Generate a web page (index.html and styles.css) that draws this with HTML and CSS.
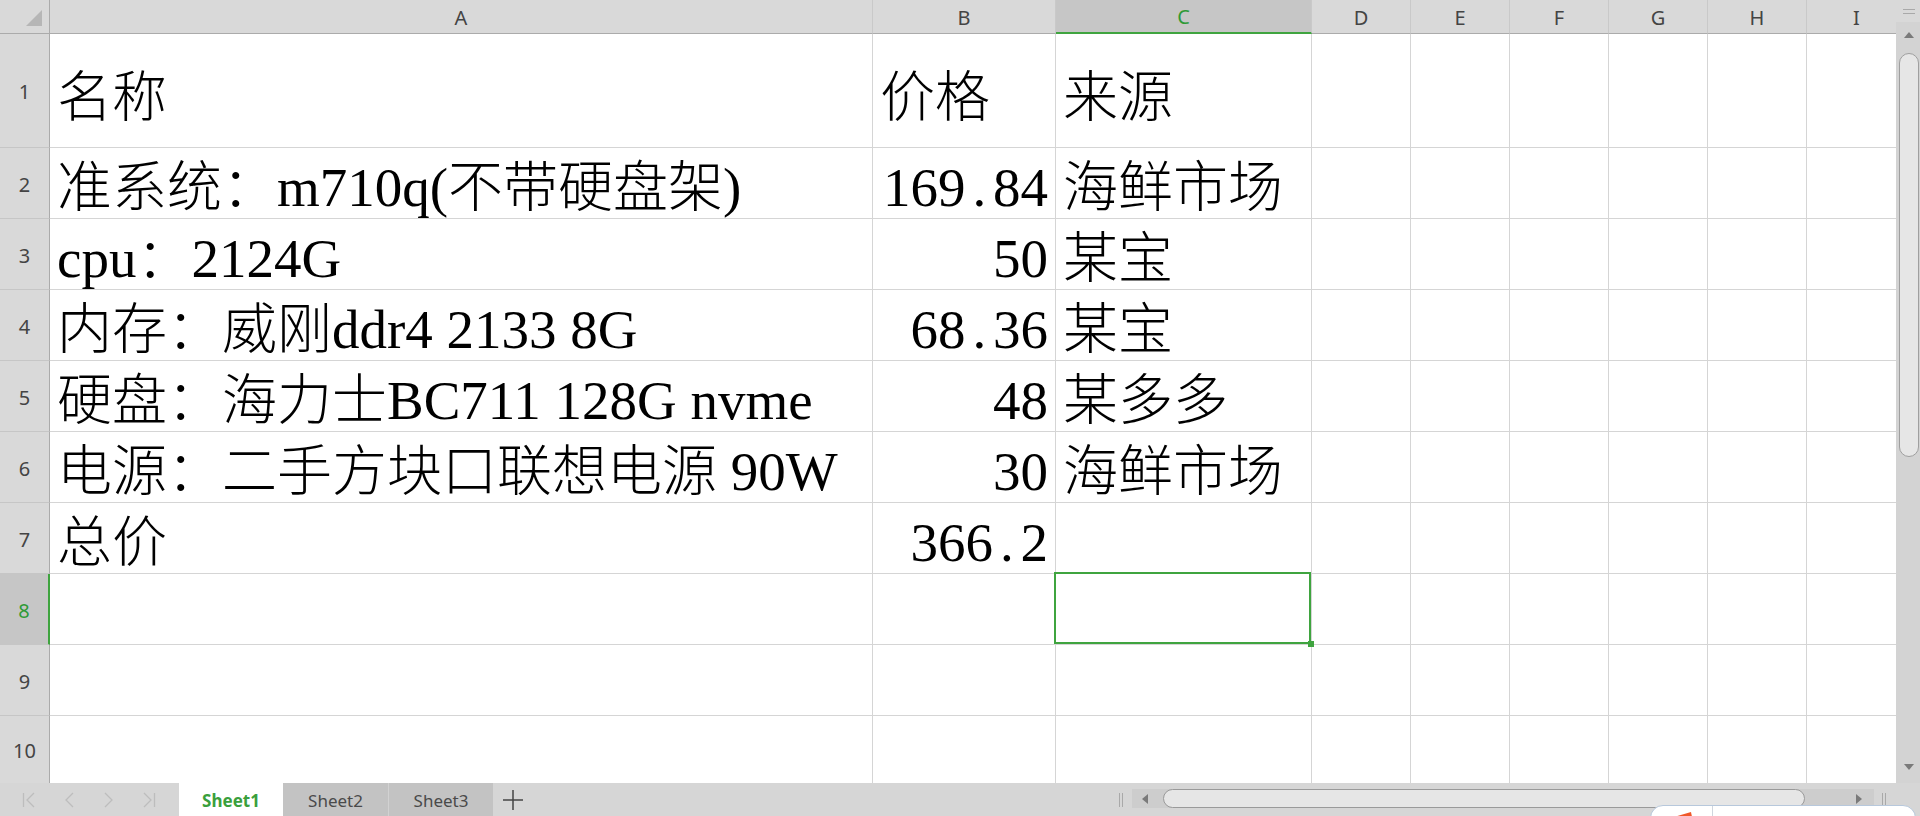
FILE: index.html
```html
<!DOCTYPE html>
<html lang="zh-CN">
<head>
<meta charset="utf-8">
<title>Sheet1</title>
<link rel="stylesheet" href="styles.css">
</head>
<body>
<div class="app">
  <div class="main">
    <div class="sheet">
      <div class="corner"><svg class="tri" width="16" height="16" viewBox="0 0 16 16"><polygon points="16,0 16,16 0,16" fill="#b6b6b6"/></svg></div>
      <div class="ch">A</div><div class="ch">B</div><div class="ch sel">C</div><div class="ch">D</div><div class="ch">E</div><div class="ch">F</div><div class="ch">G</div><div class="ch">H</div><div class="ch ci">I</div>

      <div class="rh">1</div><div class="c r1">名称</div><div class="c r1">价格</div><div class="c r1">来源</div><div class="c"></div><div class="c"></div><div class="c"></div><div class="c"></div><div class="c"></div><div class="c ci"></div>
      <div class="rh">2</div><div class="c">准系统：m710q(不带硬盘架)</div><div class="c num">169<span class="dot">.</span>84</div><div class="c">海鲜市场</div><div class="c"></div><div class="c"></div><div class="c"></div><div class="c"></div><div class="c"></div><div class="c ci"></div>
      <div class="rh">3</div><div class="c">cpu：2124G</div><div class="c num">50</div><div class="c">某宝</div><div class="c"></div><div class="c"></div><div class="c"></div><div class="c"></div><div class="c"></div><div class="c ci"></div>
      <div class="rh">4</div><div class="c">内存：威刚ddr4 2133 8G</div><div class="c num">68<span class="dot">.</span>36</div><div class="c">某宝</div><div class="c"></div><div class="c"></div><div class="c"></div><div class="c"></div><div class="c"></div><div class="c ci"></div>
      <div class="rh">5</div><div class="c">硬盘：海力士BC711 128G nvme</div><div class="c num">48</div><div class="c">某多多</div><div class="c"></div><div class="c"></div><div class="c"></div><div class="c"></div><div class="c"></div><div class="c ci"></div>
      <div class="rh">6</div><div class="c">电源：二手方块口联想电源 90W</div><div class="c num">30</div><div class="c">海鲜市场</div><div class="c"></div><div class="c"></div><div class="c"></div><div class="c"></div><div class="c"></div><div class="c ci"></div>
      <div class="rh">7</div><div class="c">总价</div><div class="c num">366<span class="dot">.</span>2</div><div class="c"></div><div class="c"></div><div class="c"></div><div class="c"></div><div class="c"></div><div class="c"></div><div class="c ci"></div>
      <div class="rh sel">8</div><div class="c"></div><div class="c"></div><div class="c active"><span class="selbox"></span><span class="handle"></span></div><div class="c"></div><div class="c"></div><div class="c"></div><div class="c"></div><div class="c"></div><div class="c ci"></div>
      <div class="rh">9</div><div class="c"></div><div class="c"></div><div class="c"></div><div class="c"></div><div class="c"></div><div class="c"></div><div class="c"></div><div class="c"></div><div class="c ci"></div>
      <div class="rh lr">10</div><div class="c lr"></div><div class="c lr"></div><div class="c lr"></div><div class="c lr"></div><div class="c lr"></div><div class="c lr"></div><div class="c lr"></div><div class="c lr"></div><div class="c ci lr"></div>
    </div>
    <div class="vscroll">
      <div class="vs-top"><svg width="12" height="5" viewBox="0 0 12 5"><line x1="0" y1="0.5" x2="12" y2="0.5" stroke="#a9a9a9"/><line x1="0" y1="4.5" x2="12" y2="4.5" stroke="#a9a9a9"/></svg></div>
      <div class="vs-btn"><svg width="10" height="6" viewBox="0 0 10 6"><polygon points="5,0 10,6 0,6" fill="#7a7a7a"/></svg></div>
      <div class="vs-thumb"></div>
      <div class="vs-fill"></div>
      <div class="vs-btn"><svg width="10" height="6" viewBox="0 0 10 6"><polygon points="0,0 10,0 5,6" fill="#7a7a7a"/></svg></div>
    </div>
  </div>
  <div class="tabbar">
    <div class="nav">
      <span class="navi"><svg width="14" height="16" viewBox="0 0 14 16"><line x1="1.5" y1="1" x2="1.5" y2="15" stroke="#bdbdbd" stroke-width="1.3"/><polyline points="12,1 5,8 12,15" fill="none" stroke="#bdbdbd" stroke-width="1.3"/></svg></span>
      <span class="navi"><svg width="14" height="16" viewBox="0 0 14 16"><polyline points="11,1 4,8 11,15" fill="none" stroke="#bdbdbd" stroke-width="1.3"/></svg></span>
      <span class="navi"><svg width="14" height="16" viewBox="0 0 14 16"><polyline points="3,1 10,8 3,15" fill="none" stroke="#bdbdbd" stroke-width="1.3"/></svg></span>
      <span class="navi"><svg width="14" height="16" viewBox="0 0 14 16"><polyline points="2,1 9,8 2,15" fill="none" stroke="#bdbdbd" stroke-width="1.3"/><line x1="12.5" y1="1" x2="12.5" y2="15" stroke="#bdbdbd" stroke-width="1.3"/></svg></span>
    </div>
    <div class="tab on">Sheet1</div>
    <div class="tab">Sheet2</div>
    <div class="tab t3">Sheet3</div>
    <div class="add"><svg width="20" height="20" viewBox="0 0 20 20"><line x1="0" y1="10" x2="20" y2="10" stroke="#444" stroke-width="1.5"/><line x1="10" y1="0" x2="10" y2="20" stroke="#444" stroke-width="1.5"/></svg></div>
    <div class="spacer"></div>
    <div class="split"><svg width="6" height="14" viewBox="0 0 6 14"><line x1="1.5" y1="0" x2="1.5" y2="14" stroke="#a9a9a9"/><line x1="4.5" y1="0" x2="4.5" y2="14" stroke="#a9a9a9"/></svg></div>
    <div class="hscroll">
      <div class="hs-btn"><svg width="6" height="10" viewBox="0 0 6 10"><polygon points="6,0 6,10 0,5" fill="#7a7a7a"/></svg></div>
      <div class="hs-thumb"></div>
      <div class="hs-fill"></div>
      <div class="hs-btn"><svg width="6" height="10" viewBox="0 0 6 10"><polygon points="0,0 6,5 0,10" fill="#7a7a7a"/></svg></div>
    </div>
    <div class="split s2"><svg width="6" height="14" viewBox="0 0 6 14"><line x1="1.5" y1="0" x2="1.5" y2="14" stroke="#a9a9a9"/><line x1="4.5" y1="0" x2="4.5" y2="14" stroke="#a9a9a9"/></svg></div>
  </div>
  <div class="float">
    <svg class="fl-logo" width="44" height="14" viewBox="0 0 44 14"><polygon points="6,14 40,4 42,14" fill="#f0582a"/></svg>
    <span class="fl-div"></span>
  </div>
</div>
</body>
</html>
```

FILE: styles.css
```css
* { box-sizing: border-box; }
html, body { margin: 0; padding: 0; }
body {
  width: 1920px;
  height: 816px;
  overflow: hidden;
  background: #ffffff;
  font-family: "Noto Sans", "Liberation Sans", sans-serif;
}
.app {
  position: relative;
  display: flex;
  flex-direction: column;
  width: 1920px;
  height: 816px;
}
.main {
  display: flex;
  height: 783px;
}
.sheet {
  display: grid;
  width: 1896px;
  grid-template-columns: 50px 823px 183px 256px repeat(5, 99px) 89px;
  grid-template-rows: 34px 114px repeat(8, 71px) 67px;
}
.corner {
  background: #d9d9d9;
  border-right: 1px solid #ababab;
  border-bottom: 1px solid #ababab;
  display: flex;
  justify-content: flex-end;
  align-items: flex-end;
  padding: 0 7px 7px 0;
}
.ch {
  background: #d9d9d9;
  border-right: 1px solid #c9c9c9;
  border-bottom: 1px solid #ababab;
  display: flex;
  align-items: center;
  justify-content: center;
  font-size: 20px;
  color: #444444;
  padding-top: 1px;
}
.ch.ci { padding-left: 10px; }
.ch.sel {
  background: #c6c6c6;
  color: #2f9a36;
  border-bottom: 2px solid #3fa43f;
}
.rh {
  background: #d9d9d9;
  border-right: 1px solid #ababab;
  border-bottom: 1px solid #c6c6c6;
  display: flex;
  align-items: center;
  justify-content: center;
  font-size: 20px;
  color: #444444;
  padding-top: 2px;
}
.rh.sel {
  background: #c6c6c6;
  color: #2f9a36;
  border-right: 2px solid #3fa43f;
}
.c {
  border-right: 1px solid #d5d5d5;
  border-bottom: 1px solid #d5d5d5;
  display: flex;
  align-items: center;
  padding: 8px 7px 0 7px;
  font-family: "Liberation Serif", "Noto Sans CJK SC", serif;
  font-size: 55px;
  font-weight: 300;
  line-height: 1;
  color: #000000;
  white-space: nowrap;
}
.c.r1 { padding-top: 13px; }
.c.num { justify-content: flex-end; }
.dot {
  display: inline-block;
  width: 0.5em;
  text-align: center;
}
.ci { border-right: none; }
.lr { border-bottom: none; }
.c.active { position: relative; }
.selbox {
  position: absolute;
  left: -2px;
  top: -2px;
  right: 0;
  bottom: 0;
  border: 2px solid #3fa43f;
}
.handle {
  position: absolute;
  right: -3px;
  bottom: -3px;
  width: 6px;
  height: 6px;
  background: #3fa43f;
}
.vscroll {
  width: 24px;
  background: #d3d3d3;
  display: flex;
  flex-direction: column;
  align-items: center;
}
.vs-top {
  width: 24px;
  height: 22px;
  background: #d9d9d9;
  display: flex;
  justify-content: center;
  align-items: center;
  padding-left: 1px;
}
.vs-btn {
  width: 24px;
  height: 26px;
  display: flex;
  justify-content: center;
  align-items: center;
  padding-left: 2px;
}
.vs-thumb {
  width: 20px;
  height: 404px;
  margin: 5px 0 0 2px;
  background: #e6e6e6;
  border: 1px solid #9f9f9f;
  border-radius: 10px;
}
.vs-fill { flex: 1; }
.vscroll .vs-btn:last-child { margin-bottom: 3px; }
.tabbar {
  height: 33px;
  background: #d6d6d6;
  display: flex;
  align-items: stretch;
}
.nav {
  width: 179px;
  display: flex;
  align-items: center;
  padding-left: 9px;
}
.navi {
  width: 40px;
  display: flex;
  justify-content: center;
  align-items: center;
}
.tab {
  width: 105px;
  display: flex;
  align-items: center;
  justify-content: center;
  background: #c3c3c3;
  color: #4a4a4a;
  font-size: 17px;
  padding-top: 2px;
}
.tab.on {
  width: 104px;
  background: #ffffff;
  color: #3a9f3c;
  font-weight: 700;
}
.tab.t3 { border-left: 1px solid #d2d2d2; }
.add {
  width: 40px;
  display: flex;
  align-items: center;
  justify-content: center;
}
.spacer { flex: 1; }
.split {
  width: 8px;
  display: flex;
  align-items: center;
  justify-content: center;
  margin-right: 7px;
}
.split.s2 { margin: 0 32px 0 6px; }
.hscroll {
  width: 742px;
  height: 19px;
  margin-top: 6px;
  background: #cdcdcd;
  display: flex;
  align-items: center;
  padding-right: 2px;
}
.hs-btn {
  width: 26px;
  height: 19px;
  display: flex;
  align-items: center;
  justify-content: center;
}
.hs-thumb {
  width: 642px;
  height: 19px;
  margin-left: 5px;
  background: #e6e6e6;
  border: 1px solid #9a9a9a;
  border-radius: 10px;
}
.hs-fill { flex: 1; }
.float {
  position: absolute;
  left: 1650px;
  top: 805px;
  width: 266px;
  height: 26px;
  background: #ffffff;
  border: 1px solid #b7c8dc;
  border-radius: 14px;
  overflow: hidden;
}
.fl-logo {
  position: absolute;
  left: 0;
  top: 2px;
}
.fl-div {
  position: absolute;
  left: 61px;
  top: 0;
  width: 1px;
  height: 26px;
  background: #d0d6de;
}
```
